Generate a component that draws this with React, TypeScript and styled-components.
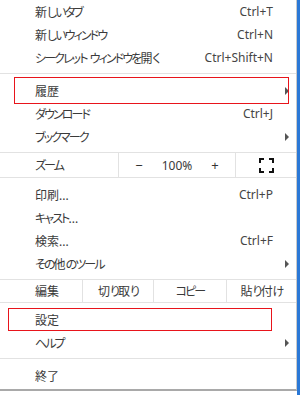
import React from "react"
import styled, { createGlobalStyle } from "styled-components"

const GlobalStyle = createGlobalStyle`
  html, body {
    margin: 0;
    padding: 0;
    background: #ffffff;
  }
  body {
    font-family: "Noto Sans", "Noto Sans CJK JP", sans-serif;
    font-size: 12px;
    color: #3a3a3a;
  }
`

const Screen = styled.div`
  display: flex;
  width: 302px;
  height: 395px;
  overflow: hidden;
`

const Frame = styled.div`
  display: flex;
  border-right: 3px solid #2a78d6;
  height: 395px;
`

const Menu = styled.div`
  width: 296px;
  border-right: 1px solid #c9c9c9;
  border-bottom: 2px solid #a9a9a9;
  padding-bottom: 2px;
  background: #ffffff;
  display: flex;
  flex-direction: column;
  align-self: flex-start;
`

const Item = styled.div`
  position: relative;
  display: grid;
  grid-template-columns: 1fr auto 16px;
  align-items: center;
  height: 23px;
  padding: 0 7px 0 35px;
  font-feature-settings: "palt";
  white-space: nowrap;
`

const Label = styled.span`
  color: #3a3a3a;
`

const Kana = styled.span`
  letter-spacing: -1.9px;
`

const Shortcut = styled.span`
  color: #454545;
  text-align: right;
`

const Arrow = styled.span`
  justify-self: end;
  width: 0;
  height: 0;
  border-left: 4px solid #555555;
  border-top: 4px solid transparent;
  border-bottom: 4px solid transparent;
`

const Separator = styled.div`
  height: 1px;
  margin: 4px 0 5px;
  background: #e2e2e2;
`

const ToolRow = styled.div<{ $columns: string; $height: number }>`
  display: grid;
  grid-template-columns: ${(p) => p.$columns};
  height: ${(p) => p.$height}px;
  margin: 4px 0 5px;
  border-top: 1px solid #e2e2e2;
  border-bottom: 1px solid #e2e2e2;
  font-feature-settings: "palt";
`

const Cell = styled.div<{ $align?: "start" | "center" }>`
  display: flex;
  align-items: center;
  justify-content: ${(p) => (p.$align === "start" ? "flex-start" : "center")};
  padding-left: ${(p) => (p.$align === "start" ? "35px" : "0")};
  border-left: ${(p) => (p.$align === "start" ? "none" : "1px solid #e2e2e2")};
  white-space: nowrap;
`

const ZoomControls = styled.div`
  display: flex;
  align-items: center;
  gap: 19px;
`

const ZoomButton = styled.span`
  color: #333333;
  font-size: 13px;
`

const Annotation = styled.div<{ $top: number; $bottom: number; $left: number; $right: number }>`
  position: absolute;
  top: ${(p) => p.$top}px;
  bottom: ${(p) => p.$bottom}px;
  left: ${(p) => p.$left}px;
  right: ${(p) => p.$right}px;
  border: 1px solid #e8141b;
  pointer-events: none;
`

// kana in the reference font are narrower than in Noto Sans CJK
function Jp({ text }: { text: string }) {
  return (
    <span>
      {text.split(/([\u3040-\u30ff]+)/).map((part, i) =>
        /[\u3040-\u30ff]/.test(part) ? <Kana key={i}>{part}</Kana> : part
      )}
    </span>
  )
}

function FullscreenIcon() {
  return (
    <svg width="15" height="15" viewBox="0 0 15 15" fill="none">
      <path
        d="M1 5V1h4M10 1h4v4M14 10v4h-4M5 14H1v-4"
        stroke="#111111"
        strokeWidth="2"
      />
    </svg>
  )
}

type Entry = {
  label: string
  shortcut?: string
  submenu?: boolean
  mark?: { top: number; bottom: number; left: number; right: number }
}

function MenuItem({ label, shortcut, submenu, mark }: Entry) {
  return (
    <Item>
      <Label>
        <Jp text={label} />
      </Label>
      <Shortcut>{shortcut}</Shortcut>
      {submenu ? <Arrow /> : <span />}
      {mark && (
        <Annotation
          $top={mark.top}
          $bottom={mark.bottom}
          $left={mark.left}
          $right={mark.right}
        />
      )}
    </Item>
  )
}

export default function App() {
  return (
    <Screen>
      <GlobalStyle />
      <Frame>
        <Menu>
          <MenuItem label="新しいタブ" shortcut="Ctrl+T" />
          <MenuItem label="新しいウィンドウ" shortcut="Ctrl+N" />
          <MenuItem label="シークレット ウィンドウを開く" shortcut="Ctrl+Shift+N" />
          <Separator />
          <MenuItem
            label="履歴"
            submenu
            mark={{ top: -2, bottom: -2, left: 14, right: 7 }}
          />
          <MenuItem label="ダウンロード" shortcut="Ctrl+J" />
          <MenuItem label="ブックマーク" submenu />
          <ToolRow $columns="118px 117px 1fr" $height={24}>
            <Cell $align="start">
              <Jp text="ズーム" />
            </Cell>
            <Cell>
              <ZoomControls>
                <ZoomButton>−</ZoomButton>
                <span>100%</span>
                <ZoomButton>+</ZoomButton>
              </ZoomControls>
            </Cell>
            <Cell>
              <FullscreenIcon />
            </Cell>
          </ToolRow>
          <MenuItem label="印刷..." shortcut="Ctrl+P" />
          <MenuItem label="キャスト..." />
          <MenuItem label="検索..." shortcut="Ctrl+F" />
          <MenuItem label="その他のツール" submenu />
          <ToolRow $columns="82px 71px 73px 1fr" $height={22}>
            <Cell $align="start">編集</Cell>
            <Cell>
              <Jp text="切り取り" />
            </Cell>
            <Cell>
              <Jp text="コピー" />
            </Cell>
            <Cell>
              <Jp text="貼り付け" />
            </Cell>
          </ToolRow>
          <MenuItem
            label="設定"
            mark={{ top: 0, bottom: 0, left: 8, right: 24 }}
          />
          <MenuItem label="ヘルプ" submenu />
          <Separator />
          <MenuItem label="終了" />
        </Menu>
      </Frame>
    </Screen>
  )
}
